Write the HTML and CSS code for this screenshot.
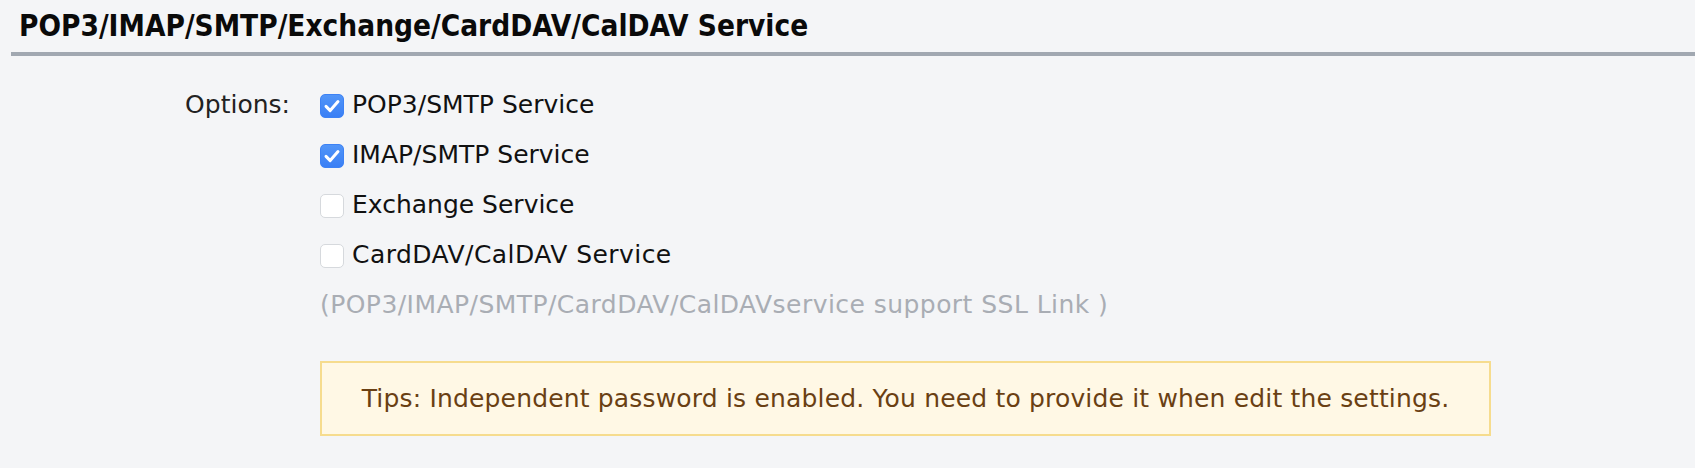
FILE: index.html
```html
<!DOCTYPE html>
<html>
<head>
<meta charset="utf-8">
<link rel="stylesheet" href="styles.css">
</head>
<body>
<div class="page">
  <h1 class="title">POP3/IMAP/SMTP/Exchange/CardDAV/CalDAV Service</h1>
  <div class="form">
    <div class="label">Options:</div>
    <div class="options">
      <label class="opt"><span class="cb checked"><svg viewBox="0 0 24 24" width="24" height="24"><path d="M6 12.4 L10.2 16.6 L18 7.6" fill="none" stroke="#fff" stroke-width="3" stroke-linecap="round" stroke-linejoin="round"/></svg></span><span class="txt">POP3/SMTP Service</span></label>
      <label class="opt"><span class="cb checked"><svg viewBox="0 0 24 24" width="24" height="24"><path d="M6 12.4 L10.2 16.6 L18 7.6" fill="none" stroke="#fff" stroke-width="3" stroke-linecap="round" stroke-linejoin="round"/></svg></span><span class="txt">IMAP/SMTP Service</span></label>
      <label class="opt"><span class="cb"></span><span class="txt">Exchange Service</span></label>
      <label class="opt"><span class="cb"></span><span class="txt slashy">CardDAV/CalDAV Service</span></label>
      <div class="note">(POP3/IMAP/SMTP/CardDAV/CalDAVservice support SSL Link )</div>
      <div class="tips">Tips: Independent password is enabled. You need to provide it when edit the settings.</div>
    </div>
  </div>
</div>
</body>
</html>
```
FILE: styles.css
```css
html, body {
  margin: 0;
  padding: 0;
  background: #f4f5f7;
}
body {
  font-family: "DejaVu Sans", "Liberation Sans", sans-serif;
  font-size: 25px;
  color: #111;
  height: 468px;
  overflow: hidden;
}
.page {
  display: flex;
  flex-direction: column;
}
.title {
  margin: 0 0 0 11px;
  padding: 8px 0 8px 8px;
  font-family: "DejaVu Sans Condensed", "DejaVu Sans", sans-serif;
  font-stretch: condensed;
  font-weight: bold;
  font-size: 29.5px;
  line-height: 36px;
  color: #0a0a0a;
  border-bottom: 4px solid #a1a8b1;
}
.form {
  display: grid;
  grid-template-columns: 290px auto;
  column-gap: 30px;
  padding-top: 24px;
}
.label {
  text-align: right;
  line-height: 50px;
  color: #222;
}
.options {
  display: flex;
  flex-direction: column;
  align-items: flex-start;
}
.opt {
  display: flex;
  align-items: center;
  height: 50px;
  line-height: 50px;
  gap: 8px;
}
.cb {
  width: 22px;
  height: 22px;
  border: 1px solid #d6d9dd;
  border-radius: 5px;
  background: #fff;
  display: flex;
  align-items: center;
  justify-content: center;
  margin-top: 1px;
}
.cb.checked {
  border-color: #3d82f5;
  background: linear-gradient(#5195f8, #3a7ff5);
}
.cb svg {
  display: block;
  flex: none;
}
.txt {
  color: #111;
}
.slashy {
  letter-spacing: 0.45px;
}
.note {
  line-height: 50px;
  color: #a9adb4;
  letter-spacing: 0.45px;
}
.tips {
  margin-top: 31px;
  width: 1167px;
  height: 71px;
  line-height: 71px;
  border: 2px solid #f6dc8e;
  background: #fff8e5;
  color: #6a4013;
  text-align: center;
  letter-spacing: 0.17px;
}
```
